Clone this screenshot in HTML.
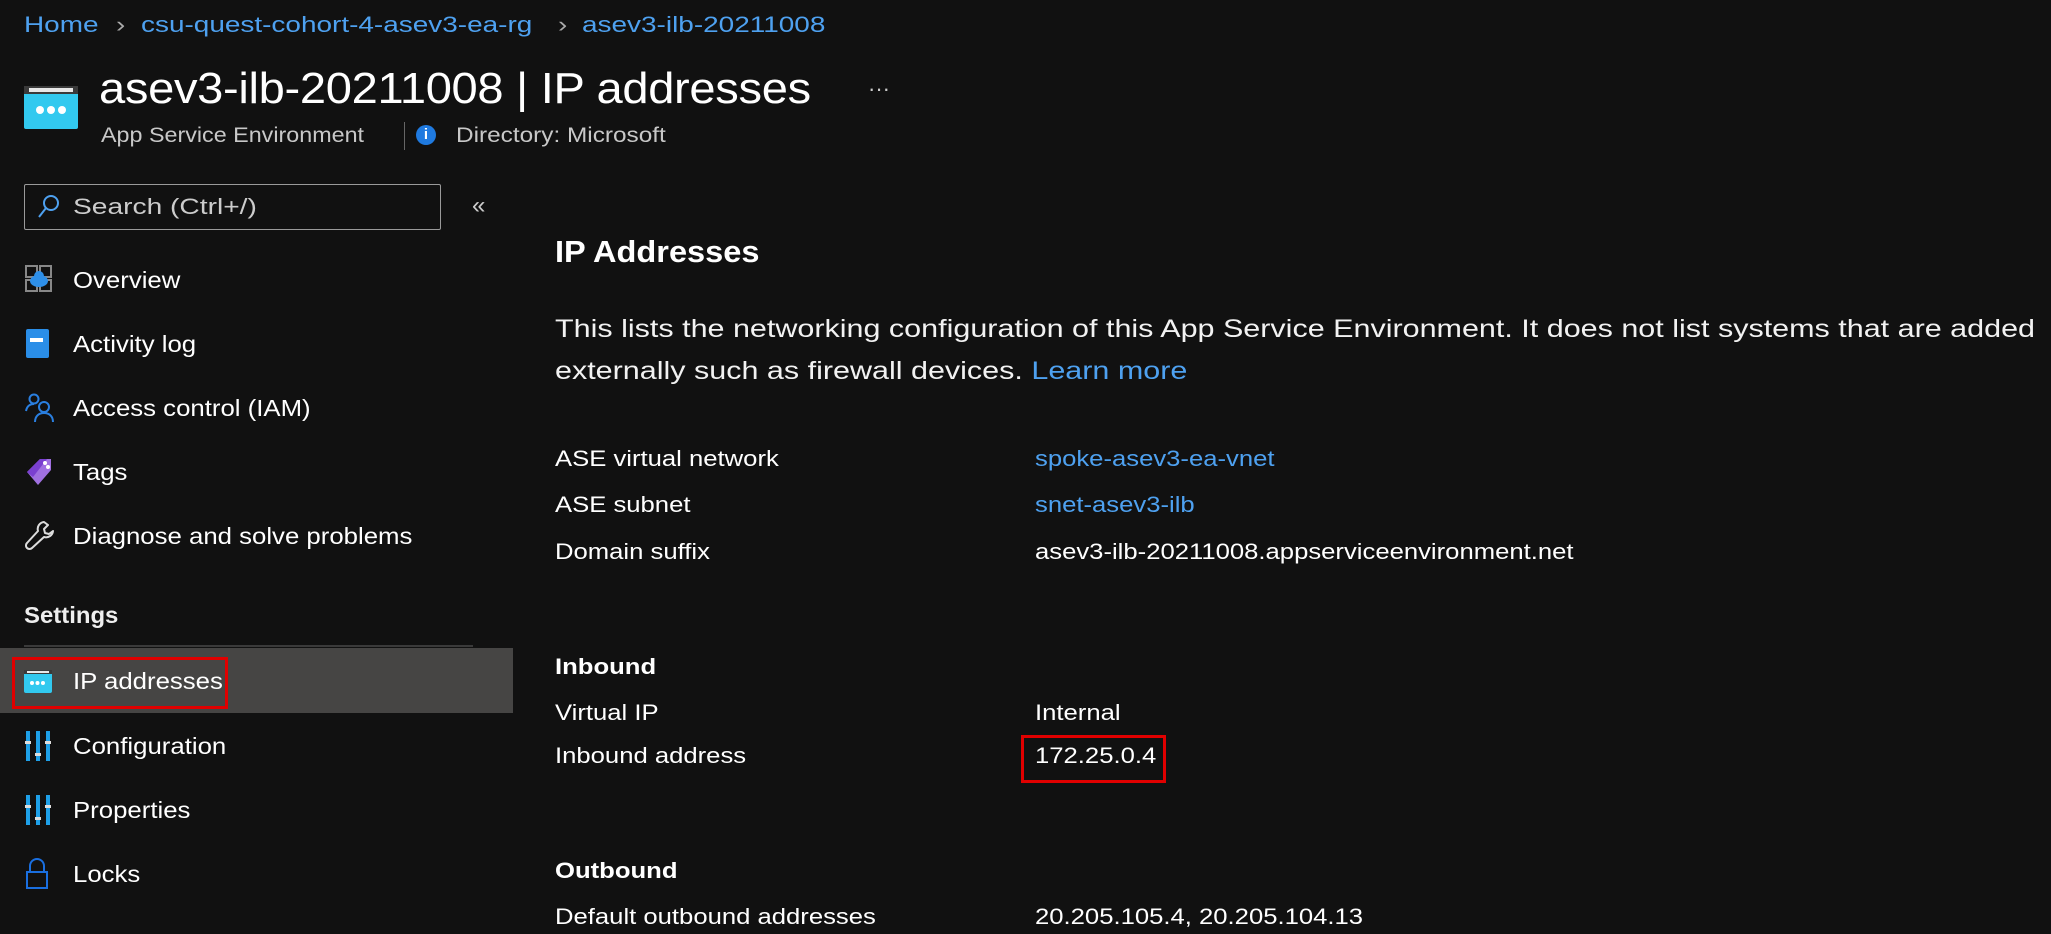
<!DOCTYPE html>
<html><head><meta charset="utf-8"><style>
body{margin:0;width:2051px;height:934px;background:#111;overflow:hidden;font-family:"Liberation Sans",sans-serif;color:#fff;position:relative}
.a{position:absolute;white-space:nowrap;transform-origin:0 50%}
.l{color:#4ea1f0}
.nav{font-size:23px;line-height:30px;left:73px;transform:scaleX(1.12)}
.ic{position:absolute;left:25px}
.t{font-size:22.5px;line-height:30px;transform:scaleX(1.14)}
.bc{font-size:22px;line-height:28px;top:11px;transform:scaleX(1.27)}
</style></head><body>
<!-- breadcrumb -->
<div class="a l bc" style="left:24px">Home</div>
<div class="a bc" style="left:116px;color:#aaa">›</div>
<div class="a l bc" style="left:141px">csu-quest-cohort-4-asev3-ea-rg</div>
<div class="a bc" style="left:558px;color:#aaa">›</div>
<div class="a l bc" style="left:582px">asev3-ilb-20211008</div>
<!-- header icon -->
<div class="a" style="left:24px;top:86px;width:54px;height:43px;background:#32c9ef;border-radius:2px"></div>
<div class="a" style="left:24px;top:86px;width:54px;height:8px;background:#3a3a3a"></div>
<div class="a" style="left:29px;top:88px;width:44px;height:4px;background:#e8e8e8"></div>
<div class="a" style="left:36px;top:106px;width:8px;height:8px;background:#fff;border-radius:50%"></div>
<div class="a" style="left:47px;top:106px;width:8px;height:8px;background:#fff;border-radius:50%"></div>
<div class="a" style="left:58px;top:106px;width:8px;height:8px;background:#fff;border-radius:50%"></div>
<!-- title -->
<div class="a" style="left:99px;top:64px;font-size:44px;line-height:50px;letter-spacing:-0.3px;transform:scaleX(1.07)">asev3-ilb-20211008 | IP addresses</div>
<div class="a" style="left:868px;top:76px;font-size:22px;color:#ccc">···</div>
<div class="a" style="left:101px;top:123px;font-size:21px;line-height:26px;color:#c8c8c8;transform:scaleX(1.11)">App Service Environment</div>
<div class="a" style="left:404px;top:122px;width:1px;height:28px;background:#666"></div>
<div class="a" style="left:416px;top:125px;width:20px;height:20px;border-radius:50%;background:#1f7ae0;color:#fff;font-size:15px;font-weight:bold;text-align:center;line-height:20px">i</div>
<div class="a" style="left:456px;top:123px;font-size:21px;line-height:26px;color:#c8c8c8;transform:scaleX(1.16)">Directory: Microsoft</div>
<!-- search -->
<div class="a" style="left:24px;top:184px;width:415px;height:44px;border:1.5px solid #9a9a9a;border-radius:2px"></div>
<svg class="a" style="left:36px;top:193px" width="26" height="28" viewBox="0 0 26 28"><circle cx="15" cy="10" r="7" fill="none" stroke="#4ea1f0" stroke-width="2"/><line x1="10" y1="15" x2="3" y2="24" stroke="#4ea1f0" stroke-width="2"/></svg>
<div class="a" style="left:73px;top:193px;font-size:22px;line-height:28px;color:#ccc;transform:scaleX(1.28)">Search (Ctrl+/)</div>
<div class="a" style="left:472px;top:192px;font-size:24px;line-height:28px;color:#ccc">«</div>
<!-- nav -->
<svg class="ic" style="top:265px" width="28" height="28" viewBox="0 0 28 28"><rect x="1" y="1" width="11" height="11" fill="none" stroke="#888" stroke-width="2"/><rect x="15" y="1" width="11" height="11" fill="none" stroke="#888" stroke-width="2"/><rect x="1" y="15" width="11" height="11" fill="none" stroke="#888" stroke-width="2"/><rect x="15" y="15" width="11" height="11" fill="none" stroke="#888" stroke-width="2"/><ellipse cx="14" cy="16" rx="9" ry="6" fill="#2e8fe8"/><circle cx="14" cy="11" r="5" fill="#2e8fe8"/></svg>
<div class="a nav" style="top:265px">Overview</div>
<div class="a" style="left:26px;top:329px;width:23px;height:29px;background:#2a8ee8;border-radius:2px"></div>
<div class="a" style="left:30px;top:338px;width:13px;height:4px;background:#fff"></div>
<div class="a nav" style="top:329px">Activity log</div>
<svg class="ic" style="top:393px" width="30" height="30" viewBox="0 0 30 30"><circle cx="9" cy="6" r="4.5" fill="none" stroke="#2a7fe0" stroke-width="2"/><path d="M1 18c1-5 4-7 8-7" fill="none" stroke="#2a7fe0" stroke-width="2"/><circle cx="19" cy="14" r="5" fill="none" stroke="#2a7fe0" stroke-width="2"/><path d="M10 29c0-6 4-9 9-9s9 3 9 9" fill="none" stroke="#2a7fe0" stroke-width="2"/></svg>
<div class="a nav" style="top:393px">Access control (IAM)</div>
<svg class="ic" style="top:457px" width="28" height="30" viewBox="0 0 28 30"><path d="M2 15L15 2H26V13L13 28Z" fill="#a070e0"/><path d="M2 15L15 2H22L8 20Z" fill="#7a40d0"/><circle cx="20" cy="6" r="2" fill="#fff"/><circle cx="23" cy="10" r="2" fill="#fff"/></svg>
<div class="a nav" style="top:457px">Tags</div>
<svg class="ic" style="top:520px" width="30" height="32" viewBox="0 0 30 32"><path d="M19 2a7 7 0 0 0-6 9L2 23a3 3 0 0 0 5 5l12-11a7 7 0 0 0 9-6l-4 3-4-1-1-4 4-4z" fill="none" stroke="#ddd" stroke-width="2" stroke-linejoin="round"/></svg>
<div class="a nav" style="top:521px">Diagnose and solve problems</div>
<div class="a" style="left:24px;top:600px;font-size:23px;line-height:30px;font-weight:bold;color:#eee;transform:scaleX(1.04)">Settings</div>
<div class="a" style="left:24px;top:645px;width:449px;height:2px;background:#3a3a3a"></div>
<div class="a" style="left:0;top:648px;width:513px;height:65px;background:#464544"></div>
<div class="a" style="left:12px;top:657px;width:210px;height:46px;border:3px solid #e00000"></div>
<div class="a" style="left:24px;top:670px;width:28px;height:23px;background:#32c9ef;border-radius:2px"></div>
<div class="a" style="left:24px;top:670px;width:28px;height:4px;background:#3a3a3a"></div>
<div class="a" style="left:27px;top:671px;width:22px;height:2px;background:#e8e8e8"></div>
<div class="a" style="left:30px;top:681px;width:15px;height:4px;border-top:4px dotted #fff"></div>
<div class="a nav" style="top:666px">IP addresses</div>
<svg class="ic" style="top:730px" width="26" height="32" viewBox="0 0 26 32"><rect x="1" y="1" width="4" height="30" fill="#1ea0e8"/><rect x="11" y="1" width="4" height="30" fill="#1ea0e8"/><rect x="21" y="1" width="4" height="30" fill="#1ea0e8"/><rect x="0" y="11" width="6" height="3" fill="#ddd"/><rect x="10" y="23" width="6" height="3" fill="#ddd"/><rect x="20" y="11" width="6" height="3" fill="#ddd"/></svg>
<div class="a nav" style="top:731px">Configuration</div>
<svg class="ic" style="top:794px" width="26" height="32" viewBox="0 0 26 32"><rect x="1" y="1" width="4" height="30" fill="#1ea0e8"/><rect x="11" y="1" width="4" height="30" fill="#1ea0e8"/><rect x="21" y="1" width="4" height="30" fill="#1ea0e8"/><rect x="0" y="11" width="6" height="3" fill="#ddd"/><rect x="10" y="23" width="6" height="3" fill="#ddd"/><rect x="20" y="11" width="6" height="3" fill="#ddd"/></svg>
<div class="a nav" style="top:795px">Properties</div>
<svg class="ic" style="top:858px" width="24" height="32" viewBox="0 0 24 32"><path d="M5 14V8a7 7 0 0 1 14 0v6" fill="none" stroke="#1a6fe0" stroke-width="2"/><rect x="2" y="14" width="20" height="16" fill="none" stroke="#1a6fe0" stroke-width="2"/></svg>
<div class="a nav" style="top:859px">Locks</div>
<!-- content -->
<div class="a" style="left:555px;top:233px;font-size:31px;line-height:38px;font-weight:bold;transform:scaleX(1.05)">IP Addresses</div>
<div class="a" style="left:555px;top:308px;font-size:25px;line-height:42px;color:#f2f2f2;transform:scaleX(1.22);transform-origin:0 0">This lists the networking configuration of this App Service Environment. It does not list systems that are added<br>externally such as firewall devices. <span class="l">Learn more</span></div>
<div class="a t" style="left:555px;top:444px">ASE virtual network</div>
<div class="a t l" style="left:1035px;top:444px">spoke-asev3-ea-vnet</div>
<div class="a t" style="left:555px;top:490px">ASE subnet</div>
<div class="a t l" style="left:1035px;top:490px">snet-asev3-ilb</div>
<div class="a t" style="left:555px;top:537px">Domain suffix</div>
<div class="a t" style="left:1035px;top:537px">asev3-ilb-20211008.appserviceenvironment.net</div>
<div class="a t" style="left:555px;top:652px;font-weight:bold">Inbound</div>
<div class="a t" style="left:555px;top:698px">Virtual IP</div>
<div class="a t" style="left:1035px;top:698px">Internal</div>
<div class="a t" style="left:555px;top:741px">Inbound address</div>
<div class="a t" style="left:1035px;top:741px">172.25.0.4</div>
<div class="a" style="left:1021px;top:735px;width:139px;height:42px;border:3px solid #e00000"></div>
<div class="a t" style="left:555px;top:856px;font-weight:bold">Outbound</div>
<div class="a t" style="left:555px;top:902px">Default outbound addresses</div>
<div class="a t" style="left:1035px;top:902px">20.205.105.4, 20.205.104.13</div>
</body></html>
